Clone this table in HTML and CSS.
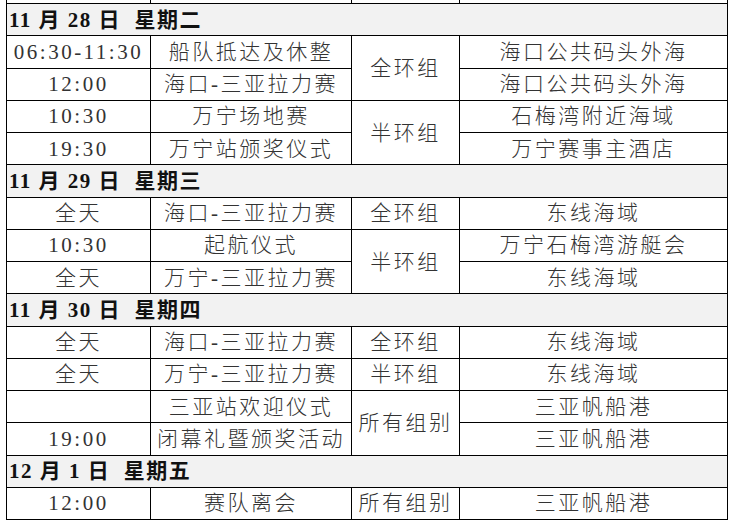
FILE: index.html
```html
<!DOCTYPE html>
<html lang="zh-CN">
<head>
<meta charset="utf-8">
<title>赛程</title>
<link rel="stylesheet" href="styles.css">
</head>
<body>
<table class="schedule">
  <colgroup>
    <col class="c-time">
    <col class="c-event">
    <col class="c-group">
    <col class="c-place">
  </colgroup>
  <tbody>
    <tr class="stub"><td></td><td></td><td></td><td></td></tr>
    <tr class="day"><td colspan="4">11 月 28 日&nbsp;&nbsp;星期二</td></tr>
    <tr><td>06:30-11:30</td><td>船队抵达及休整</td><td rowspan="2">全环组</td><td>海口公共码头外海</td></tr>
    <tr><td>12:00</td><td>海口-三亚拉力赛</td><td>海口公共码头外海</td></tr>
    <tr><td>10:30</td><td>万宁场地赛</td><td rowspan="2">半环组</td><td>石梅湾附近海域</td></tr>
    <tr><td>19:30</td><td>万宁站颁奖仪式</td><td>万宁赛事主酒店</td></tr>
    <tr class="day"><td colspan="4">11 月 29 日&nbsp;&nbsp;星期三</td></tr>
    <tr><td>全天</td><td>海口-三亚拉力赛</td><td>全环组</td><td>东线海域</td></tr>
    <tr><td>10:30</td><td>起航仪式</td><td rowspan="2">半环组</td><td>万宁石梅湾游艇会</td></tr>
    <tr><td>全天</td><td>万宁-三亚拉力赛</td><td>东线海域</td></tr>
    <tr class="day"><td colspan="4">11 月 30 日&nbsp;&nbsp;星期四</td></tr>
    <tr><td>全天</td><td>海口-三亚拉力赛</td><td>全环组</td><td>东线海域</td></tr>
    <tr><td>全天</td><td>万宁-三亚拉力赛</td><td>半环组</td><td>东线海域</td></tr>
    <tr><td></td><td>三亚站欢迎仪式</td><td rowspan="2">所有组别</td><td>三亚帆船港</td></tr>
    <tr><td>19:00</td><td>闭幕礼暨颁奖活动</td><td>三亚帆船港</td></tr>
    <tr class="day"><td colspan="4">12 月 1 日&nbsp;&nbsp;星期五</td></tr>
    <tr><td>12:00</td><td>赛队离会</td><td>所有组别</td><td>三亚帆船港</td></tr>
  </tbody>
</table>
</body>
</html>
```

FILE: styles.css
```css
html, body {
  margin: 0;
  padding: 0;
  background: #ffffff;
}

.schedule {
  margin: 0 0 0 6px;
  width: 721px;
  table-layout: fixed;
  border-collapse: collapse;
  font-family: "Liberation Serif", "Noto Sans CJK SC", serif;
  font-size: 21px;
  font-weight: 300;
  color: #333333;
  letter-spacing: 2.5px;
}

.c-time { width: 144px; }
.c-event { width: 201px; }
.c-group { width: 108px; }
.c-place { width: 268px; }

.schedule td {
  border: 1px solid #000000;
  height: 31.25px;
  padding: 0;
  text-align: center;
  vertical-align: middle;
  white-space: nowrap;
  line-height: 24px;
}

.schedule .stub td {
  height: 3px;
  border-top: none;
}

.schedule .day td {
  background: #f2f2f2;
  text-align: left;
  padding-left: 2px;
  font-weight: 700;
  color: #111111;
  letter-spacing: 1.5px;
}
```
